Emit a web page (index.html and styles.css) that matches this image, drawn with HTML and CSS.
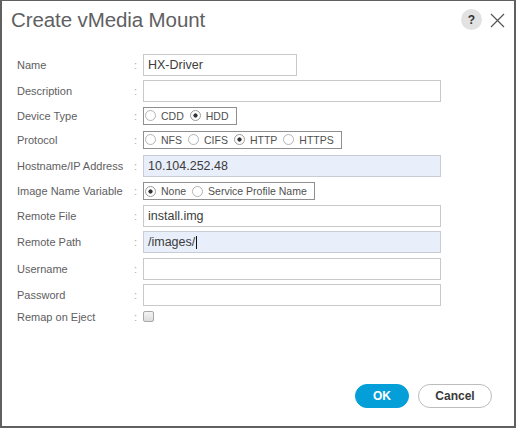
FILE: index.html
```html
<!DOCTYPE html>
<html>
<head>
<meta charset="utf-8">
<link rel="stylesheet" href="styles.css">
</head>
<body>
<div class="dialog">
  <div class="header">
    <div class="title">Create vMedia Mount</div>
    <div class="tools">
      <span class="help">?</span>
      <svg class="close" width="15" height="15" viewBox="0 0 15 15"><path d="M1 1 L14 14 M14 1 L1 14" stroke="#555" stroke-width="1.2" fill="none"/></svg>
    </div>
  </div>
  <div class="form">
    <div class="label">Name</div><div class="colon">:</div>
    <div class="field"><div class="input short">HX-Driver</div></div>

    <div class="label">Description</div><div class="colon">:</div>
    <div class="field"><div class="input"></div></div>

    <div class="label">Device Type</div><div class="colon">:</div>
    <div class="field"><div class="group">
      <span class="opt"><span class="radio"></span>CDD</span>
      <span class="opt"><span class="radio on"></span>HDD</span>
    </div></div>

    <div class="label">Protocol</div><div class="colon">:</div>
    <div class="field"><div class="group">
      <span class="opt"><span class="radio"></span>NFS</span>
      <span class="opt"><span class="radio"></span>CIFS</span>
      <span class="opt"><span class="radio on"></span>HTTP</span>
      <span class="opt"><span class="radio"></span>HTTPS</span>
    </div></div>

    <div class="label">Hostname/IP Address</div><div class="colon">:</div>
    <div class="field"><div class="input filled">10.104.252.48</div></div>

    <div class="label">Image Name Variable</div><div class="colon">:</div>
    <div class="field"><div class="group">
      <span class="opt"><span class="radio on"></span>None</span>
      <span class="opt"><span class="radio"></span>Service Profile Name</span>
    </div></div>

    <div class="label">Remote File</div><div class="colon">:</div>
    <div class="field"><div class="input">install.img</div></div>

    <div class="label">Remote Path</div><div class="colon">:</div>
    <div class="field"><div class="input filled">/images/<span class="caret"></span></div></div>

    <div class="label">Username</div><div class="colon">:</div>
    <div class="field"><div class="input"></div></div>

    <div class="label">Password</div><div class="colon">:</div>
    <div class="field"><div class="input"></div></div>

    <div class="label">Remap on Eject</div><div class="colon">:</div>
    <div class="field"><span class="checkbox"></span></div>
  </div>
  <div class="footer">
    <button class="btn ok">OK</button>
    <button class="btn cancel">Cancel</button>
  </div>
</div>
</body>
</html>
```

FILE: styles.css
```css
html, body {
  margin: 0;
  padding: 0;
}
body {
  background: #606060;
  padding: 1px 2px 2px 2px;
  width: 512px;
  height: 425px;
  font-family: "Liberation Sans", Arial, sans-serif;
}
.dialog {
  background: #fff;
  width: 512px;
  height: 425px;
  display: flex;
  flex-direction: column;
}
.header {
  height: 51px;
  box-sizing: border-box;
  padding: 7px 9px 0 9px;
  display: flex;
  justify-content: space-between;
  align-items: flex-start;
}
.title {
  font-size: 20.5px;
  line-height: 24px;
  color: #606062;
  letter-spacing: -0.1px;
}
.tools {
  display: flex;
  align-items: flex-start;
  gap: 8px;
}
.help {
  margin-top: 1px;
  width: 21px;
  height: 21px;
  border-radius: 50%;
  background: #e2e2e2;
  color: #333;
  font-weight: bold;
  font-size: 12px;
  display: flex;
  align-items: center;
  justify-content: center;
}
.close {
  margin-top: 5px;
}
.form {
  display: grid;
  grid-template-columns: 117px 9px 1fr;
  grid-template-rows: 26px 26px 23px 25px 27px 24px 26px 26px 27px 25px 20px;
  padding-left: 15px;
  align-items: center;
}
.label {
  font-size: 11px;
  color: #5e5e61;
}
.colon {
  font-size: 11px;
  color: #aaa;
}
.field {
  display: flex;
  align-items: center;
}
.input {
  box-sizing: border-box;
  width: 298px;
  height: 22px;
  border: 1px solid #c9c9c9;
  padding: 0 4px;
  font-size: 12.5px;
  line-height: 20px;
  color: #3c3c3c;
  display: flex;
  align-items: center;
}
.input.short {
  width: 154px;
}
.input.filled {
  background: #e8eefa;
  border-color: #c8ccd4;
}
.caret {
  display: inline-block;
  width: 0;
  height: 13px;
  border-left: 1px solid #111;
  margin-left: 1px;
}
.group {
  box-sizing: border-box;
  height: 18px;
  border: 1px solid #8f8f8f;
  display: inline-flex;
  align-items: center;
  padding: 0 7px 0 1px;
  gap: 6px;
  font-size: 10.5px;
  color: #505050;
}
.opt {
  display: inline-flex;
  align-items: center;
  gap: 5px;
}
.radio {
  box-sizing: border-box;
  width: 11px;
  height: 11px;
  border-radius: 50%;
  border: 1px solid #b4b4b4;
  background: #fff;
}
.radio.on {
  background: radial-gradient(circle, #333 0 1.8px, #fff 2.4px);
  border-color: #9a9a9a;
}
.checkbox {
  box-sizing: border-box;
  width: 11px;
  height: 11px;
  border: 1px solid #a8a8a8;
  border-radius: 2px;
  background: linear-gradient(#f4f4f4, #dcdcdc);
  margin-top: -1px;
}
.footer {
  margin-top: auto;
  display: flex;
  justify-content: flex-end;
  gap: 9px;
  padding: 0 22px 18px 0;
}
.btn {
  box-sizing: border-box;
  height: 24px;
  border-radius: 12px;
  font-family: "Liberation Sans", Arial, sans-serif;
  font-weight: bold;
  font-size: 12px;
  padding: 0;
}
.ok {
  width: 54px;
  background: #049fd9;
  border: 1px solid #049fd9;
  color: #fff;
}
.cancel {
  width: 74px;
  background: #fff;
  border: 1px solid #bdbdbd;
  color: #3a3a3a;
}
```
